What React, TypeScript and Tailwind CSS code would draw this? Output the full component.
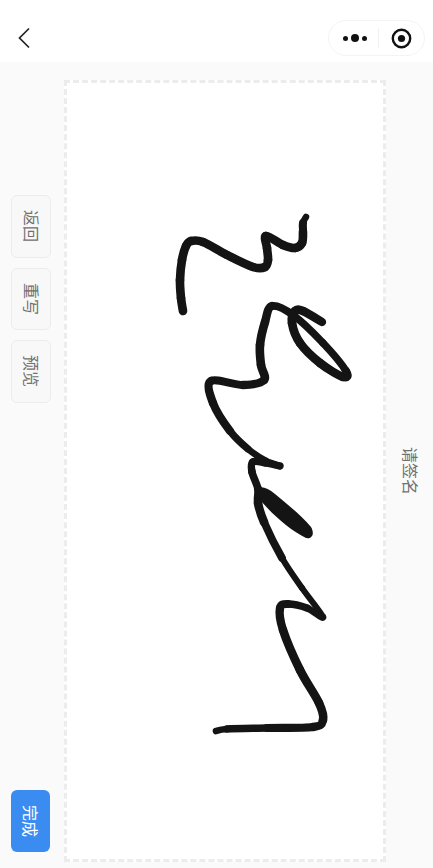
import React from "react";

type Pt = [number, number, number];

// one bezier piece per pair of points, so the pen width can change along the line
const toSegments = (pts: Pt[]) =>
  pts.slice(0, -1).map((p1, i) => {
    const p0 = pts[i - 1] || p1;
    const p2 = pts[i + 1];
    const p3 = pts[i + 2] || p2;
    const c1x = p1[0] + (p2[0] - p0[0]) / 6;
    const c1y = p1[1] + (p2[1] - p0[1]) / 6;
    const c2x = p2[0] - (p3[0] - p1[0]) / 6;
    const c2y = p2[1] - (p3[1] - p1[1]) / 6;
    return {
      d: `M${p1[0]} ${p1[1]} C${c1x} ${c1y} ${c2x} ${c2y} ${p2[0]} ${p2[1]}`,
      w: ((p1[2] + p2[2]) / 2) * 1.08,
    };
  });

const strokes: Pt[][] = [
  [
    [183, 311, 8], [181, 298, 8], [180, 280, 8], [182, 260, 8], [186, 246, 8], [191, 241, 8],
    [203, 242, 8], [227, 255, 8], [253, 267, 8], [265, 267, 8], [268, 260, 8], [267, 248, 8],
    [266, 236, 8], [283, 245, 8], [295, 248, 8], [302, 243, 8], [303, 232, 8], [303, 223, 7], [306, 217, 5],
  ],
  [
    [322, 322, 7.5], [303, 311, 8], [295, 311, 8], [292, 323, 8], [300, 343, 8], [320, 363, 8],
    [343, 377, 8], [346, 371, 7], [323, 343, 7], [293, 315, 7], [272, 306, 7.5], [265, 322, 8],
    [260, 345, 8], [261, 365, 8], [264, 380, 8], [243, 385, 7.5], [211, 381, 7.5], [213, 403, 8],
    [230, 431, 7], [248, 449, 6.5], [266, 461, 6], [280, 466, 6.5], [266, 463, 7], [253, 462, 7],
    [252, 472, 7], [258, 489, 7], [258, 503, 8], [264, 522, 8], [282, 558, 6.5], [302, 588, 5],
    [323, 617, 6], [307, 608, 6.5], [288, 604, 7.5], [280, 608, 7.5], [283, 630, 8], [300, 670, 8],
    [319, 703, 8], [323, 720, 8], [313, 727, 7.5], [267, 728, 7.5], [227, 729, 6.5], [216, 731, 6],
  ],
];

const Signature = () => (
  <svg viewBox="67 83 316 776" className="block w-full h-full">
    <g fill="none" stroke="#141414" strokeLinecap="round" strokeLinejoin="round">
      {strokes.map((pts, i) =>
        toSegments(pts).map((s, j) => <path key={`${i}-${j}`} d={s.d} strokeWidth={s.w} />)
      )}
    </g>
    {/* thick blob of the "e" */}
    <path
      d="M258 488 C262 486 268 488 275 494 C288 505 301 515 311 527 C315 534 312 539 306 538 C290 530 274 516 260 500 Z"
      fill="#141414"
    />
  </svg>
);

const SideButton = ({ label, h }: { label: string; h: string }) => (
  <div
    className={`w-[40px] ${h} flex items-center justify-center rounded-md border border-[#ececec] bg-[#f8f8f8] text-[#707070] text-[16px]`}
  >
    <span className="[writing-mode:vertical-rl] [text-orientation:sideways] ml-[2px]">{label}</span>
  </div>
);

export default function App() {
  return (
    <div className="w-[433px] h-[868px] flex flex-col bg-[#fafafa] overflow-hidden font-['Noto_Sans_CJK_SC','Noto_Sans',sans-serif]">
      <div className="h-[62px] shrink-0 bg-white flex items-center justify-between pl-[17px] pr-[8px] pt-[14px]">
        <svg width="14" height="22" viewBox="0 0 14 22" fill="none" stroke="#222222" strokeWidth="1.7">
          <path d="M12 1.5 L2.5 11 L12 20.5" />
        </svg>
        <div className="w-[97px] h-[36px] rounded-full border border-[#f4f4f4] bg-white flex items-center">
          <div className="flex-1 flex items-center justify-center gap-[3px] pl-[3px]">
            <span className="w-[5px] h-[5px] rounded-full bg-[#111111]" />
            <span className="w-[8px] h-[8px] rounded-full bg-[#111111]" />
            <span className="w-[5px] h-[5px] rounded-full bg-[#111111]" />
          </div>
          <div className="w-px h-[20px] bg-[#f0f0f0]" />
          <div className="flex-1 flex items-center justify-center">
            <svg width="21" height="21" viewBox="0 0 21 21">
              <circle cx="10.5" cy="10.5" r="8.7" fill="none" stroke="#111111" strokeWidth="2.4" />
              <circle cx="10.5" cy="10.5" r="3.6" fill="#111111" />
            </svg>
          </div>
        </div>
      </div>

      <div className="flex-1 flex min-h-0">
        <div className="w-[64px] shrink-0 flex flex-col justify-between pl-[11px] pt-[133px] pb-[16px]">
          <div className="flex flex-col gap-[10px]">
            <SideButton label="返回" h="h-[63px]" />
            <SideButton label="重写" h="h-[62px]" />
            <SideButton label="预览" h="h-[63px]" />
          </div>
          <div className="w-[39px] h-[62px] flex items-center justify-center rounded-md bg-[#3b8cf0] text-white text-[16px]">
            <span className="[writing-mode:vertical-rl] [text-orientation:sideways]">完成</span>
          </div>
        </div>

        <div className="w-[322px] shrink-0 mt-[18px] mb-[6px] border-[3px] border-dashed border-[#ececec] bg-white">
          <Signature />
        </div>

        <div className="flex-1 flex items-center justify-center pl-[2px]">
          <span className="[writing-mode:vertical-rl] [text-orientation:sideways] text-[#707070] text-[16px] mt-[12px]">
            请签名
          </span>
        </div>
      </div>
    </div>
  );
}
